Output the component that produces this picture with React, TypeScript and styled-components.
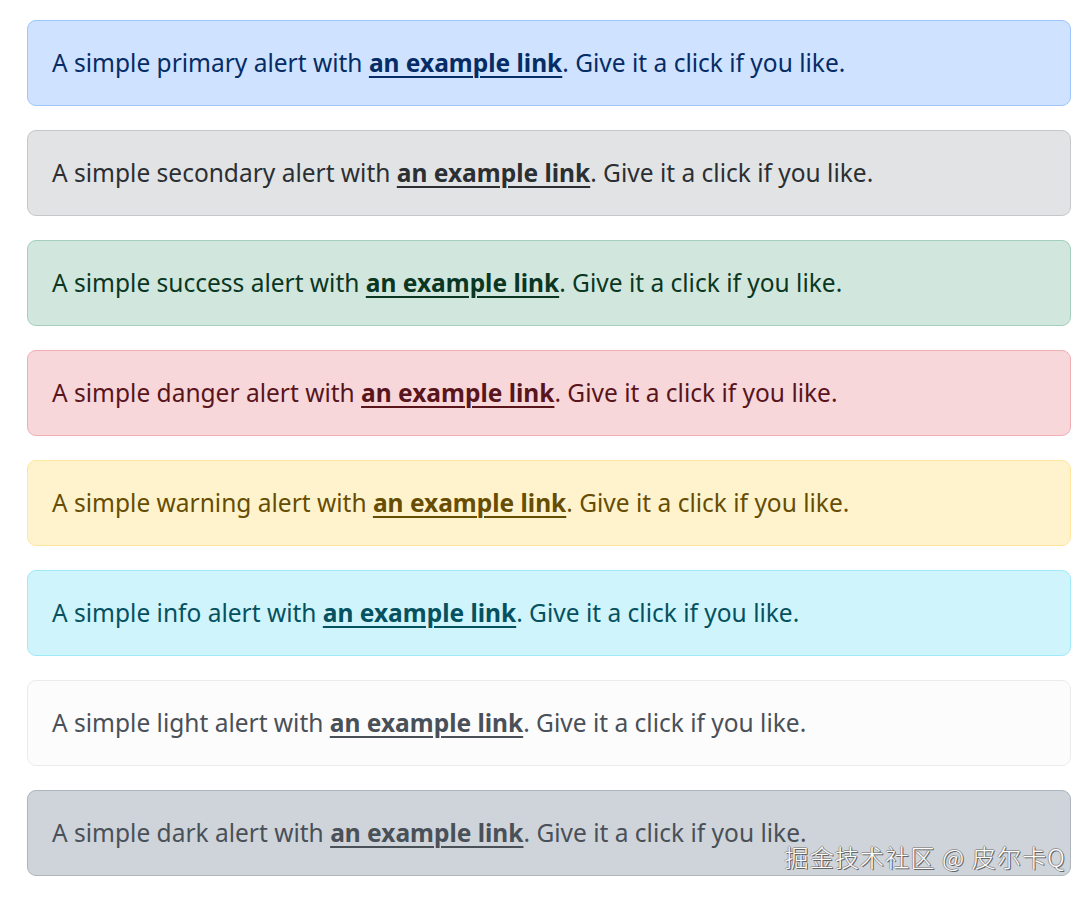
import * as React from 'react';
import styled, { createGlobalStyle } from 'styled-components';

const GlobalStyle = createGlobalStyle`
  html, body {
    margin: 0;
    padding: 0;
    background: #fff;
  }
  body {
    font-family: "Noto Sans", "Open Sans", sans-serif;
  }
`;

type Variant =
  | 'primary'
  | 'secondary'
  | 'success'
  | 'danger'
  | 'warning'
  | 'info'
  | 'light'
  | 'dark';

const palette: Record<Variant, { bg: string; border: string; color: string }> = {
  primary: { bg: '#cfe2ff', border: '#9ec5fe', color: '#052c65' },
  secondary: { bg: '#e2e3e5', border: '#c4c8cb', color: '#2b2f32' },
  success: { bg: '#d1e7dd', border: '#a3cfbb', color: '#0a3622' },
  danger: { bg: '#f8d7da', border: '#f1aeb5', color: '#58151c' },
  warning: { bg: '#fff3cd', border: '#ffe69c', color: '#664d03' },
  info: { bg: '#cff4fc', border: '#9eeaf9', color: '#055160' },
  light: { bg: '#fcfcfd', border: '#e9ecef', color: '#495057' },
  dark: { bg: '#ced4da', border: '#adb5bd', color: '#495057' },
};

const Page = styled.div`
  position: relative;
  min-height: 897px;
  box-sizing: border-box;
  padding: 20px 19px 0 27px;
  display: flex;
  flex-direction: column;
  gap: 24px;
`;

const Alert = styled.div<{ $variant: Variant }>`
  padding: 24px;
  border: 1.5px solid ${(p) => palette[p.$variant].border};
  border-radius: 9px;
  background: ${(p) => palette[p.$variant].bg};
  color: ${(p) => palette[p.$variant].color};
  font-size: 24.5px;
  line-height: 36px;
  white-space: nowrap;
`;

const AlertLink = styled.a`
  color: inherit;
  font-weight: 700;
  text-decoration: underline;
  text-underline-offset: 4px;
  text-decoration-thickness: 1.5px;
`;

const Watermark = styled.div`
  position: absolute;
  right: 24px;
  top: 842px;
  font-family: "Noto Sans CJK SC", "Noto Sans", sans-serif;
  font-size: 24px;
  font-weight: 300;
  line-height: 30px;
  color: #fff;
  letter-spacing: 1.2px;
  text-shadow:
    1px 1px 0 #666,
    -1px 0 0 #999,
    0 -1px 0 #999,
    1px 0 0 #888;
`;

const variants: Variant[] = [
  'primary',
  'secondary',
  'success',
  'danger',
  'warning',
  'info',
  'light',
  'dark',
];

export default function App() {
  return (
    <>
      <GlobalStyle />
      <Page>
        {variants.map((v) => (
          <Alert key={v} $variant={v} role="alert">
            A simple {v} alert with <AlertLink href="#">an example link</AlertLink>. Give it a
            click if you like.
          </Alert>
        ))}
        <Watermark>掘金技术社区 @ 皮尔卡Q</Watermark>
      </Page>
    </>
  );
}
